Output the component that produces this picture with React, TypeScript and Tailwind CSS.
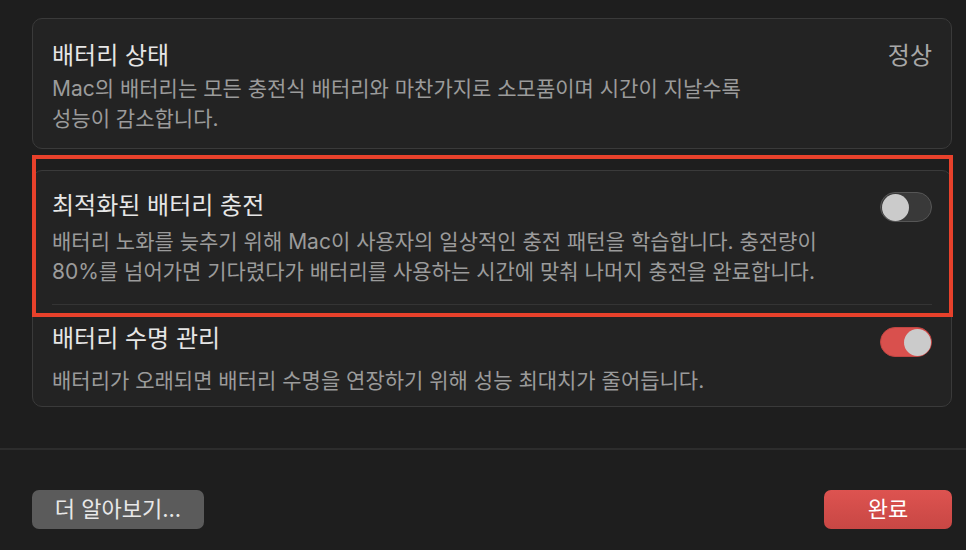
import React from "react";

const FONT = { fontFamily: 'Inter, "Noto Sans CJK KR", sans-serif' };

function Toggle({ on }: { on: boolean }) {
  return (
    <div
      className={
        "relative w-[52px] h-[30px] rounded-full shrink-0 " +
        (on
          ? "bg-[#d9504d] border border-[#c04542]"
          : "bg-[#393939] border border-[#565656]")
      }
    >
      <div
        className={
          "absolute top-[0.5px] w-[27px] h-[27px] rounded-full bg-[#cbcbcb] " +
          (on ? "right-[0.5px]" : "left-[0.5px]")
        }
      />
    </div>
  );
}

export default function App() {
  return (
    <div
      className="relative w-[966px] h-[550px] bg-[#1e1e1e] overflow-hidden"
      style={FONT}
    >
      <div className="pt-[18px] pl-[32px] w-[952px]">
        {/* Card 1 */}
        <div className="h-[131px] rounded-[10px] bg-[#232323] border border-[#3a3a3a] px-[19px] pt-[22px]">
          <div className="flex justify-between items-start">
            <div className="text-[24px] leading-[30px] text-[#e6e6e6]">배터리 상태</div>
            <div className="text-[24px] leading-[30px] text-[#a8a8a8]">정상</div>
          </div>
          <div className="mt-[3px] text-[21px] leading-[30px] text-[#9b9b9b]">
            Mac의 배터리는 모든 충전식 배터리와 마찬가지로 소모품이며 시간이 지날수록
            <br />
            성능이 감소합니다.
          </div>
        </div>

        {/* Card 2 */}
        <div className="mt-[21px] h-[237px] rounded-[10px] bg-[#232323] border border-[#3a3a3a] px-[19px] pt-[20px]">
          <div className="flex justify-between items-start">
            <div className="text-[24px] leading-[30px] text-[#e6e6e6]">최적화된 배터리 충전</div>
            <div className="mt-[1px]">
              <Toggle on={false} />
            </div>
          </div>
          <div className="mt-[5px] text-[21px] leading-[30px] text-[#9b9b9b]">
            배터리 노화를 늦추기 위해 Mac이 사용자의 일상적인 충전 패턴을 학습합니다. 충전량이
            <br />
            80%를 넘어가면 기다렸다가 배터리를 사용하는 시간에 맞춰 나머지 충전을 완료합니다.
          </div>
          <div className="mt-[17px] h-px bg-[#343434]" />
          <div className="mt-[19px] flex justify-between items-start">
            <div className="text-[24px] leading-[30px] text-[#e6e6e6]">배터리 수명 관리</div>
            <div className="mt-[3px]">
              <Toggle on={true} />
            </div>
          </div>
          <div className="mt-[9px] text-[21px] leading-[30px] text-[#9b9b9b]">
            배터리가 오래되면 배터리 수명을 연장하기 위해 성능 최대치가 줄어듭니다.
          </div>
        </div>
      </div>

      {/* Footer divider */}
      <div className="mt-[41px] h-[2px] bg-[#2d2d2d]" />

      {/* Buttons */}
      <div className="mt-[40px] px-[32px] pr-[14px] flex justify-between">
        <button className="h-[39px] w-[172px] rounded-[7px] bg-[#5b5b5b] text-[22px] text-[#e8e8e8] flex items-center justify-center">
          더 알아보기...
        </button>
        <button className="h-[39px] w-[128px] rounded-[7px] bg-gradient-to-b from-[#dd5350] to-[#c84744] text-[22px] text-white flex items-center justify-center">
          완료
        </button>
      </div>

      {/* Highlight annotation */}
      <div className="absolute left-[32px] top-[155px] w-[921px] h-[162px] border-[4px] border-[#e8412b] pointer-events-none" />
    </div>
  );
}
